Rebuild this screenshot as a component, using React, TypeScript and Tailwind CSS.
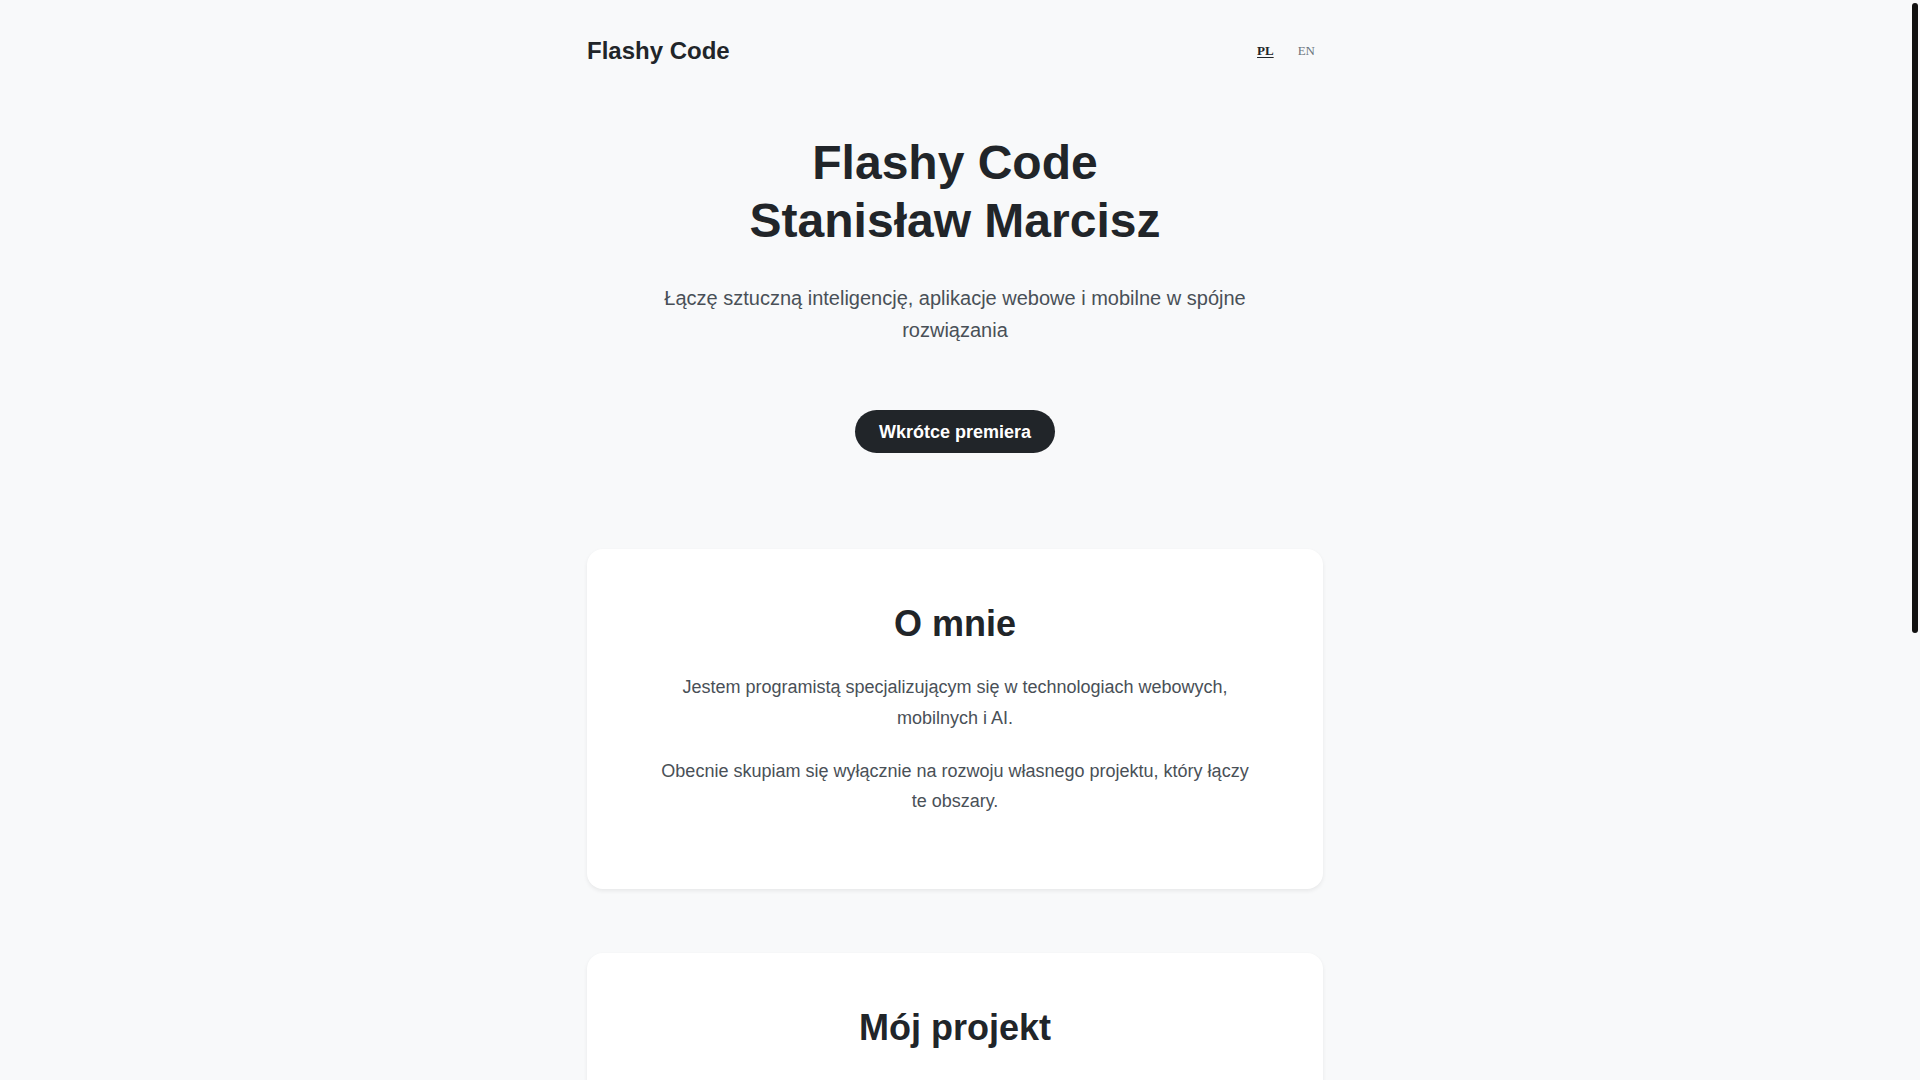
import React from "react";

const sans = { fontFamily: '"Liberation Sans", Arial, sans-serif' };

function Header() {
  return (
    <header className="flex h-[101px] items-center justify-between pt-px">
      <span className="text-2xl font-bold text-[#212529]">Flashy Code</span>
      <nav className="flex items-center gap-2 font-['Liberation_Serif',serif] text-[13px]">
        <button type="button" className="px-2 font-bold text-[#212529] underline underline-offset-2">
          PL
        </button>
        <button type="button" className="px-2 text-[#6c757d]">
          EN
        </button>
      </nav>
    </header>
  );
}

function Hero() {
  return (
    <section className="flex flex-col items-center pb-24 pt-[33px] text-center">
      <h1 className="text-5xl font-bold leading-[1.2] text-[#212529]">
        Flashy Code
        <br />
        Stanisław Marcisz
      </h1>
      <p className="mx-auto mt-[33px] max-w-[600px] text-xl leading-[1.6] text-[#495057]">
        Łączę sztuczną inteligencję, aplikacje webowe i mobilne w spójne rozwiązania
      </p>
      <button
        type="button"
        className="mt-16 flex h-[43px] items-center rounded-full bg-[#212529] px-6 text-lg font-bold text-white"
      >
        Wkrótce premiera
      </button>
    </section>
  );
}

function Card({ title, children }: { title: string; children: React.ReactNode }) {
  return (
    <section className="rounded-2xl bg-white px-12 pb-[48px] pt-[53px] text-center shadow-[0_2px_4px_rgba(0,0,0,0.07)]">
      <h2 className="mb-[27px] text-4xl font-bold leading-[1.2] text-[#212529]">{title}</h2>
      <div className="mx-auto max-w-[600px] text-lg leading-[1.7] text-[#495057]">{children}</div>
    </section>
  );
}

export default function App() {
  return (
    <div className="flex min-h-screen bg-[#f8f9fa]" style={sans}>
      <main className="flex-1">
        <div className="mx-auto max-w-3xl px-4">
          <Header />
          <Hero />
          <div className="flex flex-col gap-16 pb-16">
            <Card title="O mnie">
              <p className="mb-[22px]">
                Jestem programistą specjalizującym się w technologiach webowych, mobilnych i AI.
              </p>
              <p className="mb-6">
                Obecnie skupiam się wyłącznie na rozwoju własnego projektu, który łączy te obszary.
              </p>
            </Card>
            <Card title="Mój projekt">
              <p className="mb-6">
                Pracuję nad aplikacją, która wykorzystuje sztuczną inteligencję, aby ułatwić codzienną pracę.
              </p>
              <p className="mb-6">
                Szczegóły zostaną ujawnione wkrótce. Śledź stronę, aby nie przegapić premiery.
              </p>
            </Card>
            <Card title="Kontakt">
              <p className="mb-6">kontakt@flashycode.pl</p>
            </Card>
          </div>
          <footer className="pb-32 pt-4 text-center text-sm text-[#6c757d]">© 2025 Flashy Code</footer>
        </div>
      </main>
      <aside className="w-[10px] shrink-0 pl-[2px] pt-[3px]">
        <div className="h-[630px] w-[6px] rounded-full bg-[#111111]" />
      </aside>
    </div>
  );
}
